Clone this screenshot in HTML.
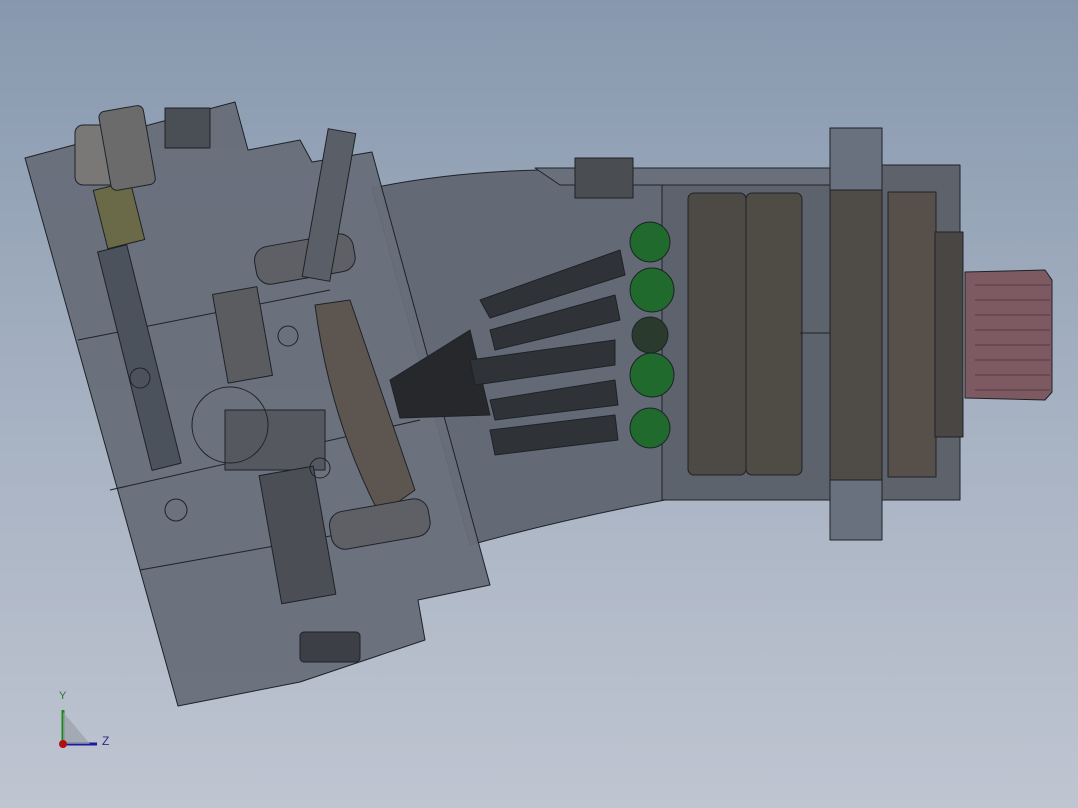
<!DOCTYPE html>
<html><head><meta charset="utf-8"><style>
html,body{margin:0;padding:0;width:1078px;height:808px;overflow:hidden}
body{background:linear-gradient(#8798ae 0%,#a3afc0 45%,#bfc5d1 100%)}
svg{position:absolute;left:0;top:0}
</style></head><body>
<svg width="1078" height="808" viewBox="0 0 1078 808" xmlns="http://www.w3.org/2000/svg">
<g stroke="#1e2228" stroke-width="1" stroke-linejoin="round">
<!-- cone housing -->
<path d="M372 188 Q450 172 540 170 L665 168 L665 500 Q560 520 470 545 Z" fill="#636a75"/>
<path d="M535 168 L830 168 L830 185 L560 185 Z" fill="#6a707b"/>
<!-- cylinder body -->
<rect x="662" y="185" width="168" height="315" fill="#5d636c"/>
<!-- drums -->
<rect x="688" y="193" width="58" height="282" rx="6" fill="#4d4944"/>
<rect x="746" y="193" width="56" height="282" rx="6" fill="#4f4b45"/>
<line x1="800" y1="333" x2="830" y2="333" stroke="#222"/>
<!-- flange -->
<rect x="830" y="128" width="52" height="412" fill="#6a717e"/>
<rect x="830" y="190" width="52" height="290" fill="#4f4b46"/>
<!-- right housing -->
<rect x="882" y="165" width="78" height="335" fill="#5e636b"/>
<rect x="888" y="192" width="48" height="285" fill="#57504a"/>
<rect x="935" y="232" width="28" height="205" fill="#4a4643"/>
<!-- shaft spline -->
<path d="M965 272 L1045 270 L1052 280 L1052 392 L1045 400 L965 398 Z" fill="#7d5a62"/>
<g stroke="#4a3038" stroke-width="0.7">
<line x1="975" y1="285" x2="1050" y2="285"/><line x1="975" y1="300" x2="1050" y2="300"/><line x1="975" y1="315" x2="1050" y2="315"/><line x1="975" y1="330" x2="1050" y2="330"/><line x1="975" y1="345" x2="1050" y2="345"/><line x1="975" y1="360" x2="1050" y2="360"/><line x1="975" y1="375" x2="1050" y2="375"/><line x1="975" y1="390" x2="1050" y2="390"/>
</g>
<!-- top nut on housing -->
<rect x="575" y="158" width="58" height="40" fill="#4a4d52"/>
<!-- left block -->
<path d="M25 158 L235 102 L248 150 L300 140 L312 162 L372 152 L490 585 L418 600 L425 640 L300 682 L178 706 Z" fill="#676e79" fill-opacity="0.95"/>
<path d="M78 340 L330 290 M110 490 L420 420 M140 570 L420 520" fill="none"/>
<!-- swash plate -->
<path d="M315 305 L350 300 L415 490 L380 515 Q330 420 315 305 Z" fill="#5d5650"/>
<!-- cone core -->
<path d="M390 380 L470 330 L490 415 L400 418 Z" fill="#26282b"/>
<!-- pistons -->
<g fill="#2f3236">
<path d="M480 300 L620 250 L625 275 L490 318 Z"/>
<path d="M490 330 L615 295 L620 320 L495 350 Z"/>
<path d="M470 360 L615 340 L615 365 L475 385 Z"/>
<path d="M490 400 L615 380 L618 405 L495 420 Z"/>
<path d="M490 430 L615 415 L618 440 L495 455 Z"/>
</g>
<!-- green balls -->
<g fill="#1f6a2c">
<circle cx="650" cy="242" r="20"/><circle cx="652" cy="290" r="22"/><circle cx="650" cy="335" r="18" fill="#2a3a2c"/><circle cx="652" cy="375" r="22"/><circle cx="650" cy="428" r="20"/>
</g>
<!-- spring and bolts -->
<rect x="100" y="185" width="38" height="60" fill="#6b6a48" transform="rotate(-14 119 215)"/>
<rect x="125" y="245" width="30" height="225" fill="#4c525c" transform="rotate(-14 140 360)"/>
<rect x="75" y="125" width="45" height="60" rx="8" fill="#7a7876"/>
<rect x="105" y="108" width="45" height="80" rx="6" fill="#6b6b6b" transform="rotate(-10 127 150)"/>
<rect x="220" y="290" width="45" height="90" fill="#5a5c60" transform="rotate(-10 242 335)"/>
<rect x="225" y="410" width="100" height="60" fill="#55595f"/>
<rect x="270" y="470" width="55" height="130" fill="#4b4f55" transform="rotate(-10 297 535)"/>
<rect x="255" y="240" width="100" height="38" rx="14" fill="#5e6066" transform="rotate(-10 305 260)"/>
<rect x="330" y="505" width="100" height="38" rx="14" fill="#5e6066" transform="rotate(-10 380 525)"/>
<rect x="300" y="632" width="60" height="30" rx="4" fill="#3c3f45"/>
<rect x="165" y="108" width="45" height="40" fill="#4a4e55"/>
<rect x="315" y="130" width="28" height="150" fill="#5a5e66" transform="rotate(10 329 205)"/>
<circle cx="230" cy="425" r="38" fill="none"/>
<circle cx="140" cy="378" r="10" fill="none"/><circle cx="176" cy="510" r="11" fill="none"/><circle cx="320" cy="468" r="10" fill="none"/><circle cx="288" cy="336" r="10" fill="none"/>
</g>
<!-- axis triad -->
<line x1="63" y1="744" x2="63" y2="710" stroke="#1a8a1a" stroke-width="3"/>
<line x1="63" y1="744" x2="97" y2="744" stroke="#1a1a9a" stroke-width="3"/>
<path d="M63 712 L90 744 L63 744 Z" fill="#9aa0a8" opacity=".7"/>
<circle cx="63" cy="744" r="4" fill="#b01010"/>
<text x="59" y="699" font-family="Liberation Sans" font-size="11" fill="#2a7a2a">Y</text>
<text x="102" y="745" font-family="Liberation Sans" font-size="12" fill="#2a2a8a">Z</text>
</svg>
</body></html>
